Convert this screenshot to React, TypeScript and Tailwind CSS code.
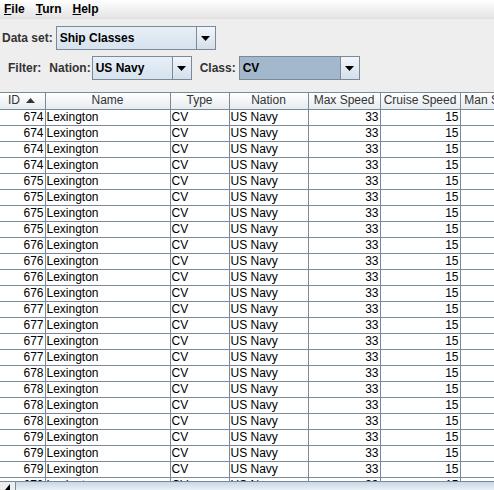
import React from "react";

const ids = [674,674,674,674,675,675,675,675,676,676,676,676,677,677,677,677,678,678,678,678,679,679,679,679];

function Arrow() {
  return (
    <svg width="9" height="5" viewBox="0 0 9 5"><path d="M0 0H9L4.5 5Z" fill="#000" /></svg>
  );
}

function Combo({ text, width, selected }: { text: string; width: string; selected?: boolean }) {
  return (
    <div className={`flex h-[24px] shrink-0 ${width}`}>
      <div
        className={`flex-1 min-w-0 flex items-center pl-[2px] border border-[#7a8a99] border-r-0 font-bold text-[12px] text-black ${
          selected ? "bg-[#a3b8cc]" : "bg-gradient-to-b from-[#e8eff7] to-[#d6e2ee]"
        }`}
      >
        <span className="pl-[1px]">{text}</span>
      </div>
      <div className="w-[20px] shrink-0 border border-[#7a8a99] bg-gradient-to-b from-[#f3f6fa] to-[#d3dfeb] flex items-center justify-center">
        <Arrow />
      </div>
    </div>
  );
}

const cols = [
  { name: "ID", w: "w-[45px]" },
  { name: "Name", w: "w-[125px]" },
  { name: "Type", w: "w-[59px]" },
  { name: "Nation", w: "w-[79px]" },
  { name: "Max Speed", w: "w-[72px]" },
  { name: "Cruise Speed", w: "w-[80px]" },
  { name: "Man Speed", w: "w-[70px]" },
];

export default function App() {
  return (
    <div
      className="w-[494px] h-[490px] overflow-hidden flex flex-col bg-[#eeeeee] text-black"
      style={{ fontFamily: '"Liberation Sans", Arial, sans-serif' }}
    >
      {/* menu bar */}
      <div className="h-[19px] shrink-0 flex items-center gap-[11px] pl-[4px] bg-gradient-to-b from-white to-[#e4e4e4] border-b border-[#e0e0e0] font-bold text-[12px]">
        <span><span className="underline">F</span>ile</span>
        <span><span className="underline">T</span>urn</span>
        <span><span className="underline">H</span>elp</span>
      </div>

      {/* data set row */}
      <div className="flex items-center mt-[7px] pl-[2px] gap-[3px] font-bold text-[12px] text-[#333333]">
        <span>Data set:</span>
        <Combo text="Ship Classes" width="w-[160px]" />
      </div>

      {/* filter row */}
      <div className="flex items-center mt-[6px] pl-[8px] font-bold text-[12px] text-[#333333]">
        <span>Filter:</span>
        <span className="ml-[8px] mr-[1px]">Nation:</span>
        <Combo text="US Navy" width="w-[100px]" />
        <span className="ml-[8px] mr-[3px]">Class:</span>
        <Combo text="CV" width="w-[121px]" selected />
      </div>

      {/* table */}
      <div className="mt-[12px] flex-1 min-h-0 border-t border-[#7a8a99] bg-white overflow-hidden relative">
        <table className="border-collapse table-fixed text-[12px]" style={{ width: 530 }}>
          <thead>
            <tr className="h-[16px] bg-gradient-to-b from-white to-[#e6ebf0]">
              {cols.map((c, i) => (
                <th
                  key={c.name}
                  className={`${c.w} font-normal text-[#333333] border-r border-b border-[#7a8a99] p-0 leading-[15px] whitespace-nowrap overflow-hidden ${i === 0 ? "text-left pl-[8px]" : "text-center"}`}
                >
                  {i === 0 ? (
                    <span className="inline-flex items-center gap-[6px]">
                      ID
                      <svg width="9" height="5" viewBox="0 0 9 5"><path d="M0 5H9L4.5 0Z" fill="#333" /></svg>
                    </span>
                  ) : (
                    c.name
                  )}
                </th>
              ))}
            </tr>
          </thead>
          <tbody>
            {ids.map((id, r) => (
              <tr key={r} className="h-[16px]">
                <td className="border-r border-b border-[#7a8a99] text-right pr-[1px] p-0 leading-[15px]">{id}</td>
                <td className="border-r border-b border-[#7a8a99] pl-[1px] p-0 leading-[15px]">Lexington</td>
                <td className="border-r border-b border-[#7a8a99] pl-[1px] p-0 leading-[15px]">CV</td>
                <td className="border-r border-b border-[#7a8a99] pl-[1px] p-0 leading-[15px]">US Navy</td>
                <td className="border-r border-b border-[#7a8a99] text-right pr-[1px] p-0 leading-[15px]">33</td>
                <td className="border-r border-b border-[#7a8a99] text-right pr-[1px] p-0 leading-[15px]">15</td>
                <td className="border-r border-b border-[#7a8a99] p-0 leading-[15px]"></td>
              </tr>
            ))}
          </tbody>
        </table>
      </div>

      {/* horizontal scrollbar */}
      <div className="h-[9px] shrink-0 flex border-t border-[#7a8a99] bg-[#eeeeee]">
        <div className="w-[15px] flex items-start justify-center pt-[2px]">
          <svg width="5" height="6" viewBox="0 0 5 6"><path d="M5 0V6H0Z" fill="#000" /></svg>
        </div>
        <div className="flex-1 border-l border-[#7a8a99] bg-gradient-to-b from-[#c9d7e6] to-[#e9f0f7]" />
      </div>
    </div>
  );
}
